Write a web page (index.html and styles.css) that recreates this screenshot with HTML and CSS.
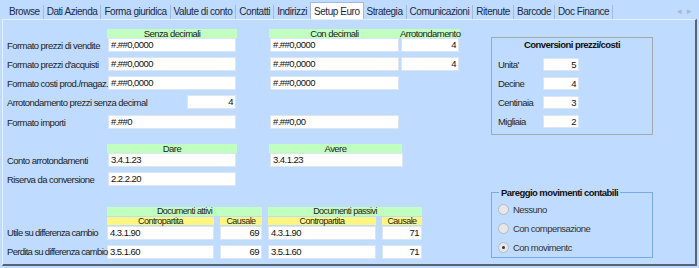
FILE: index.html
```html
<!DOCTYPE html>
<html lang="it">
<head>
    <meta charset="UTF-8">
    <title>Setup Euro</title>
    <link rel="stylesheet" href="styles.css">
</head>
<body>
    <div class="tabs">
        <span class="tab">Browse</span>
        <span class="tab">Dati Azienda</span>
        <span class="tab">Forma giuridica</span>
        <span class="tab">Valute di conto</span>
        <span class="tab">Contatti</span>
        <span class="tab">Indirizzi</span>
        <span class="tab active">Setup Euro</span>
        <span class="tab">Strategia</span>
        <span class="tab">Comunicazioni</span>
        <span class="tab">Ritenute</span>
        <span class="tab">Barcode</span>
        <span class="tab">Doc Finance</span>
        <span class="arrows"><span>&#9666;</span><span>&#9656;</span></span>
    </div>

    <div class="panel">
        <div class="form">
            <div class="row head">
                <span class="lbl"></span>
                <span class="hdr c1">Senza decimali</span>
                <span class="hdr c2">Con decimali</span>
                <span class="hdr c3">Arrotondamento</span>
            </div>
            <div class="row first">
                <span class="lbl">Formato prezzi di vendite</span>
                <span class="in c1">#.##0,0000</span>
                <span class="in c2">#.##0,0000</span>
                <span class="in c3 num">4</span>
            </div>
            <div class="row">
                <span class="lbl">Formato prezzi d'acquisti</span>
                <span class="in c1">#.##0,0000</span>
                <span class="in c2">#.##0,0000</span>
                <span class="in c3 num">4</span>
            </div>
            <div class="row">
                <span class="lbl">Formato costi prod./magaz.</span>
                <span class="in c1">#.##0,0000</span>
                <span class="in c2">#.##0,0000</span>
            </div>
            <div class="row">
                <span class="lbl wide">Arrotondamento prezzi senza decimal</span>
                <span class="in small num">4</span>
            </div>
            <div class="row importi">
                <span class="lbl">Formato importi</span>
                <span class="in c1">#.##0</span>
                <span class="in c2">#.##0,00</span>
            </div>

            <div class="row head conti">
                <span class="lbl"></span>
                <span class="hdr c1">Dare</span>
                <span class="hdr c2b">Avere</span>
            </div>
            <div class="row first">
                <span class="lbl">Conto arrotondamenti</span>
                <span class="in c1 plain">3.4.1.23</span>
                <span class="in c2b plain">3.4.1.23</span>
            </div>
            <div class="row">
                <span class="lbl">Riserva da conversione</span>
                <span class="in c1 plain">2.2.2.20</span>
            </div>

            <div class="docs">
                <span class="hdr grp">Documenti attivi</span>
                <span class="hdr grp">Documenti passivi</span>

                <span class="yel y1">Contropartita</span>
                <span class="yel y2">Causale</span>
                <span class="yel y3">Contropartita</span>
                <span class="yel y4">Causale</span>

                <span class="dlbl">Utile su differenza cambio</span>
                <span class="in plain">4.3.1.90</span>
                <span class="in num">69</span>
                <span class="in plain">4.3.1.90</span>
                <span class="in num">71</span>

                <span class="dlbl r2">Perdita su differenza cambio</span>
                <span class="in plain r2">3.5.1.60</span>
                <span class="in num r2">69</span>
                <span class="in plain r2">3.5.1.60</span>
                <span class="in num r2">71</span>
            </div>
        </div>

        <div class="side">
            <div class="conv">
                <div class="conv-title">Conversioni prezzi/costi</div>
                <div class="conv-row"><span>Unita'</span><span class="in num">5</span></div>
                <div class="conv-row"><span>Decine</span><span class="in num">4</span></div>
                <div class="conv-row"><span>Centinaia</span><span class="in num">3</span></div>
                <div class="conv-row"><span>Migliaia</span><span class="in num">2</span></div>
            </div>

            <fieldset class="pareggio">
                <legend>Pareggio movimenti contabili</legend>
                <div class="radio"><span class="dot"></span>Nessuno</div>
                <div class="radio"><span class="dot"></span>Con compensazione</div>
                <div class="radio"><span class="dot on"></span>Con movimentc</div>
            </fieldset>
        </div>
    </div>
</body>
</html>
```

FILE: styles.css
```css
body {
    margin: 0;
    width: 699px;
    height: 268px;
    overflow: hidden;
    background: #bfdbff;
    font-family: 'Liberation Sans', Arial, sans-serif;
    font-size: 9.5px;
    letter-spacing: -0.55px;
    color: #1e1e1e;
}
.tabs {
    display: flex;
    align-items: flex-end;
    height: 19px;
    padding-left: 6px;
    font-size: 10px;
    letter-spacing: -0.45px;
    color: #1a2a44;
    white-space: nowrap;
}
.tab {
    padding: 0 3px 1px 3px;
    height: 13px;
    line-height: 13px;
    border-right: 1px solid #9fbbe0;
}
.tab.active {
    background: #fff;
    height: 15px;
    line-height: 17px;
    border: 1px solid #9fbbe0;
    border-bottom: none;
    margin-left: -1px;
}
.arrows {
    margin-left: auto;
    margin-right: 7px;
    align-self: center;
    color: #a8b8cc;
    font-size: 9px;
    display: flex;
    gap: 6px;
    padding-top: 3px;
}
.panel {
    display: flex;
    margin-left: 2px;
    width: 692px;
    height: 244px;
    border-top: 1px solid #e4f0ff;
    border-left: 1px solid #e4f0ff;
    border-right: 2px solid #5a6370;
    border-bottom: 2px solid #5a6370;
}
.form {
    width: 484px;
    padding-left: 4px;
}
.row {
    display: flex;
    align-items: center;
    height: 14px;
    margin-top: 5px;
    white-space: nowrap;
}
.row.head {
    margin-top: 9px;
    height: 9px;
}
.row.first {
    margin-top: 0;
}
.row.importi {
    margin-top: 6px;
}
.row.head.conti {
    margin-top: 15px;
}
.lbl {
    width: 101px;
    overflow: hidden;
    flex-shrink: 0;
}
.lbl.wide {
    width: 180px;
}
.hdr {
    background: #c0ffc0;
    text-align: center;
    height: 9px;
    line-height: 9px;
    color: #222;
}
.row .hdr.c1 {
    width: 130px;
    margin-left: -1px;
}
.row .hdr.c2 {
    width: 131px;
    margin-left: 32px;
}
.row .hdr.c2b {
    width: 133px;
    margin-left: 32px;
}
.row .hdr.c3 {
    width: 60px;
}
.in {
    box-sizing: border-box;
    height: 14px;
    line-height: 12px;
    background: #fff;
    border: 1px solid #dde6f0;
    padding: 0 2px;
    color: #111;
    white-space: nowrap;
    overflow: hidden;
}
.in.num {
    text-align: right;
}
.row .in.c1 { width: 128px; }
.row .in.c2 { width: 129px; margin-left: 34px; }
.row .in.c2b { width: 133px; margin-left: 34px; }
.row .in.c3 { width: 58px; margin-left: 2px; }
.row .in.small { width: 49px; margin-left: 0; }

.docs {
    display: grid;
    grid-template-columns: 94px 107px 42px 108px 40px;
    column-gap: 6px;
    margin-top: 21px;
    white-space: nowrap;
}
.docs .hdr.grp {
    grid-column: span 2;
    font-size: 9px;
}
.docs .hdr.grp:first-child {
    grid-column: 2 / span 2;
}
.yel {
    background: #fff682;
    text-align: center;
    height: 8px;
    line-height: 8px;
    margin-top: 1px;
    font-size: 9px;
    color: #222;
}
.yel.y1 { grid-column: 2; }
.dlbl {
    grid-column: 1;
    margin-top: 1px;
    height: 14px;
    line-height: 14px;
    overflow: visible;
    letter-spacing: -0.7px;
    position: relative;
    z-index: 1;
}
.docs .in {
    margin-top: 1px;
}
.docs .r2 {
    margin-top: 5px;
}

.side {
    width: 162px;
}
.conv {
    margin-top: 17px;
    height: 98px;
    box-sizing: border-box;
    border: 1px solid #a3a9b2;
    padding: 0 6px;
}
.conv-title {
    font-weight: bold;
    text-align: center;
    margin-top: 1px;
    color: #111;
}
.conv-row {
    display: flex;
    align-items: center;
    height: 13px;
    margin-top: 6px;
}
.conv-row:nth-child(2) {
    margin-top: 8px;
}
.conv-row span:first-child {
    width: 45px;
}
.conv-row .in {
    width: 36px;
    height: 13px;
}
.pareggio {
    margin: 52px 0 0 0;
    padding: 5px 0 0 6px;
    border: 1px solid #7aa8ec;
    box-sizing: border-box;
    height: 71px;
}
.pareggio legend {
    font-weight: bold;
    padding: 0 2px;
    margin-left: 1px;
    color: #111;
}
.radio {
    display: flex;
    align-items: center;
    height: 12px;
    margin-bottom: 7px;
    color: #333;
}
.dot {
    width: 9px;
    height: 9px;
    border-radius: 50%;
    border: 1px solid #b6b9bd;
    background: #e6e7e9;
    margin-right: 4px;
    display: flex;
    align-items: center;
    justify-content: center;
}
.dot.on::after {
    content: "";
    width: 3px;
    height: 3px;
    border-radius: 50%;
    background: #333;
}
```
